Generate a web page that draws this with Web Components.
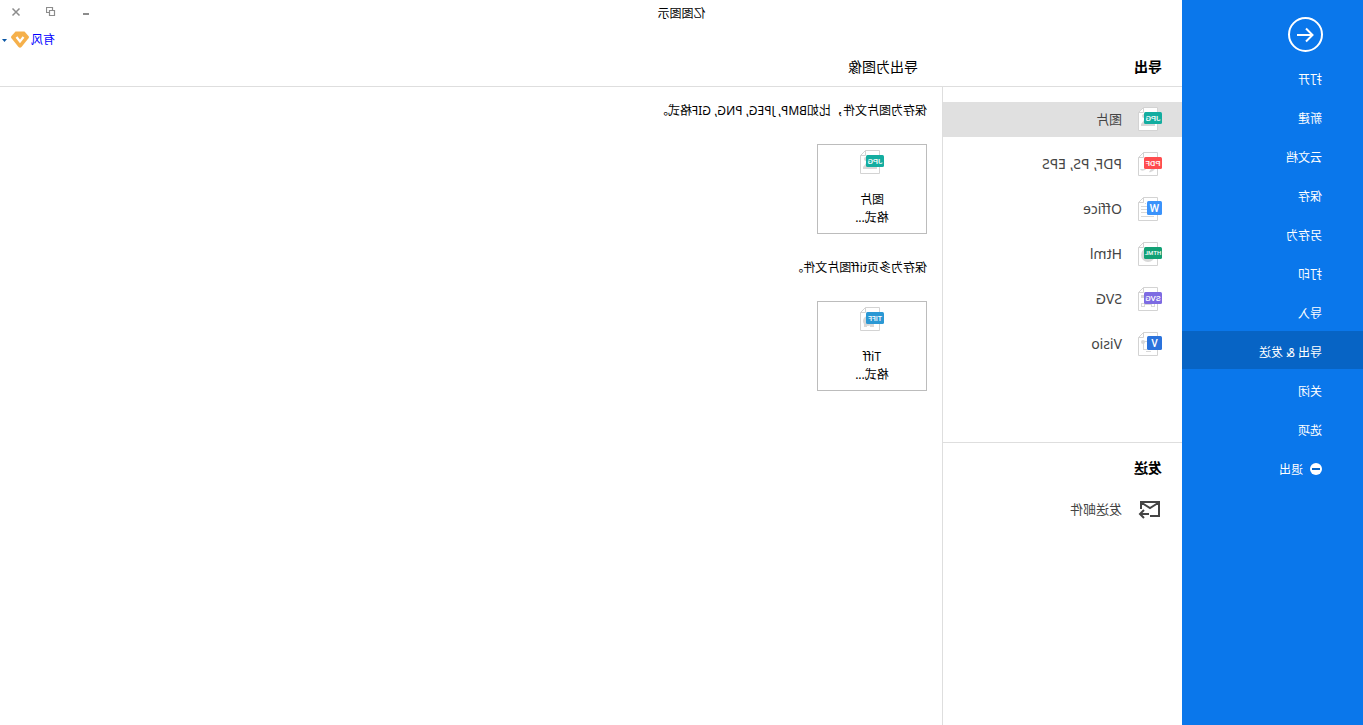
<!DOCTYPE html>
<html lang="zh-CN">
<head>
<meta charset="utf-8">
<title>亿图图示</title>
<style>
html, body { margin: 0; }
body { font: 12px/18px "Noto Sans", "Noto Sans CJK SC", sans-serif; color: #000; background: #fff; }
</style>
</head>
<body>
<mirror-app></mirror-app>
<script>
const RESET = `
  *, *::before, *::after { box-sizing: border-box; }
  button { font: inherit; color: inherit; background: none; border: 0; margin: 0; padding: 0; text-align: left; cursor: pointer; }
  h1, h2, p { margin: 0; font: inherit; }
  svg { display: block; flex: none; }
`;
function define(name, render) {
  customElements.define(name, class extends HTMLElement {
    constructor() {
      super();
      this.attachShadow({ mode: "open" });
    }
    connectedCallback() {
      this.shadowRoot.innerHTML = `<style>${RESET}</style>` + render(this);
    }
  });
}

const FILES = {
  jpg: { label: "JPG", color: "#14ada0", size: 8, art: '<circle cx="18" cy="9" r="2"/><path d="M7 19v-2l5-5h5l4 5v2z"/>' },
  pdf: { label: "PDF", color: "#ff4d4f", size: 8, art: '<path d="M7 17h4l2 3q-3 1-6-3zM16 17h6q-1 3-5 1z"/>' },
  word: { label: "W", color: "#3b93fb", size: 11, wide: true, art: '<path d="M16 6h1v1h-1zM15 9h6v1h-6zM15 12h6v1h-6zM15 15h6v1h-6zM8 19h13v1H8z"/>' },
  html: { label: "HTML", color: "#12a075", size: 6, art: '<circle cx="14" cy="13" r="7"/>' },
  svg: { label: "SVG", color: "#7d6be2", size: 8, art: '<path d="M7 16h1v3h2v-3h1v1h6v-1h4v4h-4v-2h-6v2H7zM18 17v2h2v-2zM18 8h3v3h-3z"/>' },
  visio: { label: "V", color: "#2b73dc", size: 10, wide: true, art: '<circle cx="19" cy="10" r="2"/><path d="M15 9h4v1h-4zM18 10h1v8h-1zM11 19h5v1h-5zM15 17h4v1h-4z"/>' },
  tiff: { label: "TIFF", color: "#2b98d4", size: 7, art: '<circle cx="16" cy="14" r="5"/><path d="M10 17h4v3h-4zM17 17h3v3h-3z"/>' }
};

define("file-icon", el => {
  const f = FILES[el.getAttribute("type")];
  const w = f.wide ? 15 : 18, h = f.wide ? 14 : 12, y = f.wide ? 4 : 5;
  return `
  <style>
    :host { display: block; flex: none; width: 24px; height: 24px; }
    text { font-family: Roboto, sans-serif; font-weight: 500; fill: #fff; text-anchor: middle; }
    .art { fill: #d8d8d8; }
  </style>
  <svg width="24" height="24" viewBox="0 0 24 24" aria-hidden="true">
    <path d="M4.5.5h14l5 5v18h-19z" fill="#fff" stroke="#d3d3d3"/>
    <path d="M18.5.5v5h5" fill="none" stroke="#d3d3d3"/>
    <g class="art">${f.art}</g>
    <rect y="${y}" width="${w}" height="${h}" rx="1.5" fill="${f.color}"/>
    <text x="${w / 2}" y="${y + h / 2 + Math.round(f.size * .36)}" font-size="${f.size}">${f.label}</text>
  </svg>`;
});

define("nav-item", () => `
  <style>
    :host { display: block; }
    button { display: flex; align-items: center; gap: 7px; width: 100%; height: 38px; padding: 6px 0 0 41px; color: #fff; }
    :host([selected]) button { background: #0764c5; }
  </style>
  <button type="button"><slot name="icon"></slot><span><slot></slot></span></button>`);

define("side-nav", () => `
  <style>
    :host { display: flex; flex-direction: column; width: 181px; flex: none; background: #0a77eb; padding-top: 17px; position: relative; }
    .back { width: 35px; height: 35px; margin: 0 0 6px 40px; }
    nav { display: flex; flex-direction: column; gap: 1px; }
  </style>
  <button class="back" type="button" aria-label="返回">
    <svg width="35" height="35" viewBox="0 0 35 35" fill="none" stroke="#fff" stroke-width="2">
      <circle cx="17.500" cy="17.500" r="16.500"/>
      <path d="M26 18H10.500M17 11.500L10.500 18l6.500 6.500"/>
    </svg>
  </button>
  <nav>
    <nav-item>打开</nav-item>
    <nav-item>新建</nav-item>
    <nav-item>云文档</nav-item>
    <nav-item>保存</nav-item>
    <nav-item>另存为</nav-item>
    <nav-item>打印</nav-item>
    <nav-item>导入</nav-item>
    <nav-item selected>导出 &amp; 发送</nav-item>
    <nav-item>关闭</nav-item>
    <nav-item>选项</nav-item>
    <nav-item>
      <svg slot="icon" style="display:block" width="12" height="16" viewBox="0 0 12 16"><circle cx="6" cy="7" r="6" fill="#fff"/><path d="M2 6h8v2H2z" fill="#0764c5"/></svg>退出</nav-item>
  </nav>`);

define("title-bar", () => `
  <style>
    :host { display: grid; grid-template-columns: 1fr auto 1fr; align-items: center; height: 28px; margin-left: -181px; }
    h1 { grid-column: 2; }
    .controls { display: flex; justify-content: flex-end; gap: 19px; padding: 0 8px 4px 0; }
    .controls button { width: 16px; height: 16px; display: grid; place-items: center; }
    svg { fill: none; stroke: #8c8c8c; }
  </style>
  <h1>亿图图示</h1>
  <div class="controls">
    <button type="button" aria-label="最小化"><svg width="10" height="10"><path d="M2 7h6" stroke-width="2"/></svg></button>
    <button type="button" aria-label="还原"><svg width="10" height="10"><path d="M1.500 3.500h5v5h-5zM3.500 3.500v-3h6v5h-3" stroke-width="1.200"/></svg></button>
    <button type="button" aria-label="关闭"><svg width="10" height="10"><path d="M1.500 1.500l7 7M8.500 1.500l-7 7" stroke-width="1.500"/></svg></button>
  </div>`);

define("user-menu", () => `
  <style>
    :host { display: flex; justify-content: flex-end; height: 22px; }
    button { display: flex; align-items: center; gap: 2px; padding: 2px 2px 0 0; color: #00f; }
    .caret { margin-left: 2px; }
  </style>
  <button type="button">有风
    <svg width="18" height="18" viewBox="0 0 18 18"><path d="M4.500 .5h9l4.200 4.800q.6 1-.2 2L10.500 16q-1.500 1.300-3 0L.5 7.300q-.8-1-.2-2z" fill="#f5b04b"/><path d="M5.500 6L9 10.500 12.500 6" fill="none" stroke="#fff" stroke-width="2.200"/></svg>
    <svg class="caret" width="5" height="3"><path d="M0 0h5L2.500 3z" fill="#0a56a5"/></svg>
  </button>`);

define("category-item", () => `
  <style>
    :host { display: block; }
    button { display: flex; align-items: center; gap: 16px; width: 100%; height: 35px; padding: 0 0 1px 20px; font-size: 13px; color: #444; }
    :host([latin]) button { font-size: 14px; }
    :host([selected]) button { background: #e0e0e0; }
  </style>
  <button type="button"><slot name="icon"></slot><span><slot></slot></span></button>`);

define("category-panel", () => `
  <style>
    :host { display: block; width: 240px; flex: none; border-right: 1px solid #dedede; }
    .list { display: flex; flex-direction: column; gap: 10px; padding: 15px 0 80px; }
    .send { border-top: 1px solid #dedede; padding-top: 15px; }
    h2 { font-size: 14px; line-height: 20px; font-weight: 700; padding-left: 20px; margin-bottom: 14px; }
  </style>
  <div class="list">
    <category-item selected><file-icon slot="icon" type="jpg"></file-icon>图片</category-item>
    <category-item latin><file-icon slot="icon" type="pdf"></file-icon>PDF, PS, EPS</category-item>
    <category-item latin><file-icon slot="icon" type="word"></file-icon>Office</category-item>
    <category-item latin><file-icon slot="icon" type="html"></file-icon>Html</category-item>
    <category-item latin><file-icon slot="icon" type="svg"></file-icon>SVG</category-item>
    <category-item latin><file-icon slot="icon" type="visio"></file-icon>Visio</category-item>
  </div>
  <section class="send">
    <h2>发送</h2>
    <category-item>
      <svg slot="icon" width="24" height="24" viewBox="0 0 24 24" fill="none" stroke="#444" stroke-width="2"><path d="M12 19H3V5h18v7M4 6l8 5 8-5M13 17h8M18 13l4 4-4 4"/></svg>发送邮件</category-item>
  </section>`);

define("export-option", el => `
  <style>
    :host { display: block; }
    p { font-kerning: none; }
    button { display: flex; flex-direction: column; align-items: center; gap: 17px; width: 110px; height: 90px; margin-top: 24px; padding-top: 5px; border: 1px solid #bcbcbc; text-align: center; background: #fff; }
  </style>
  <p><slot></slot></p>
  <button type="button"><file-icon type="${el.getAttribute("type")}"></file-icon><span>${el.getAttribute("label")}<br>格式...</span></button>`);

define("mirror-app", () => `
  <style>
    :host { display: flex; min-height: 100vh; transform: scaleX(-1); }
    main { flex: 1; min-width: 0; display: flex; flex-direction: column; }
    .heads { display: flex; height: 37px; padding-bottom: 2px; align-items: center; border-bottom: 1px solid #dedede; font-size: 14px; line-height: 20px; }
    .heads h2 { width: 240px; padding-left: 20px; }
    .heads h2:first-child { font-weight: 700; }
    .heads h2 + h2 { margin-left: 4px; }
    .body { flex: 1; display: flex; }
    .options { display: flex; flex-direction: column; gap: 25px; padding: 15px; }
  </style>
  <side-nav></side-nav>
  <main>
    <title-bar></title-bar>
    <user-menu></user-menu>
    <div class="heads"><h2>导出</h2><h2>导出为图像</h2></div>
    <div class="body">
      <category-panel></category-panel>
      <div class="options">
        <export-option type="jpg" label="图片">保存为图片文件，比如BMP, JPEG, PNG, GIF格式。</export-option>
        <export-option type="tiff" label="Tiff">保存为多页tiff图片文件。</export-option>
      </div>
    </div>
  </main>`);
</script>
</body>
</html>
